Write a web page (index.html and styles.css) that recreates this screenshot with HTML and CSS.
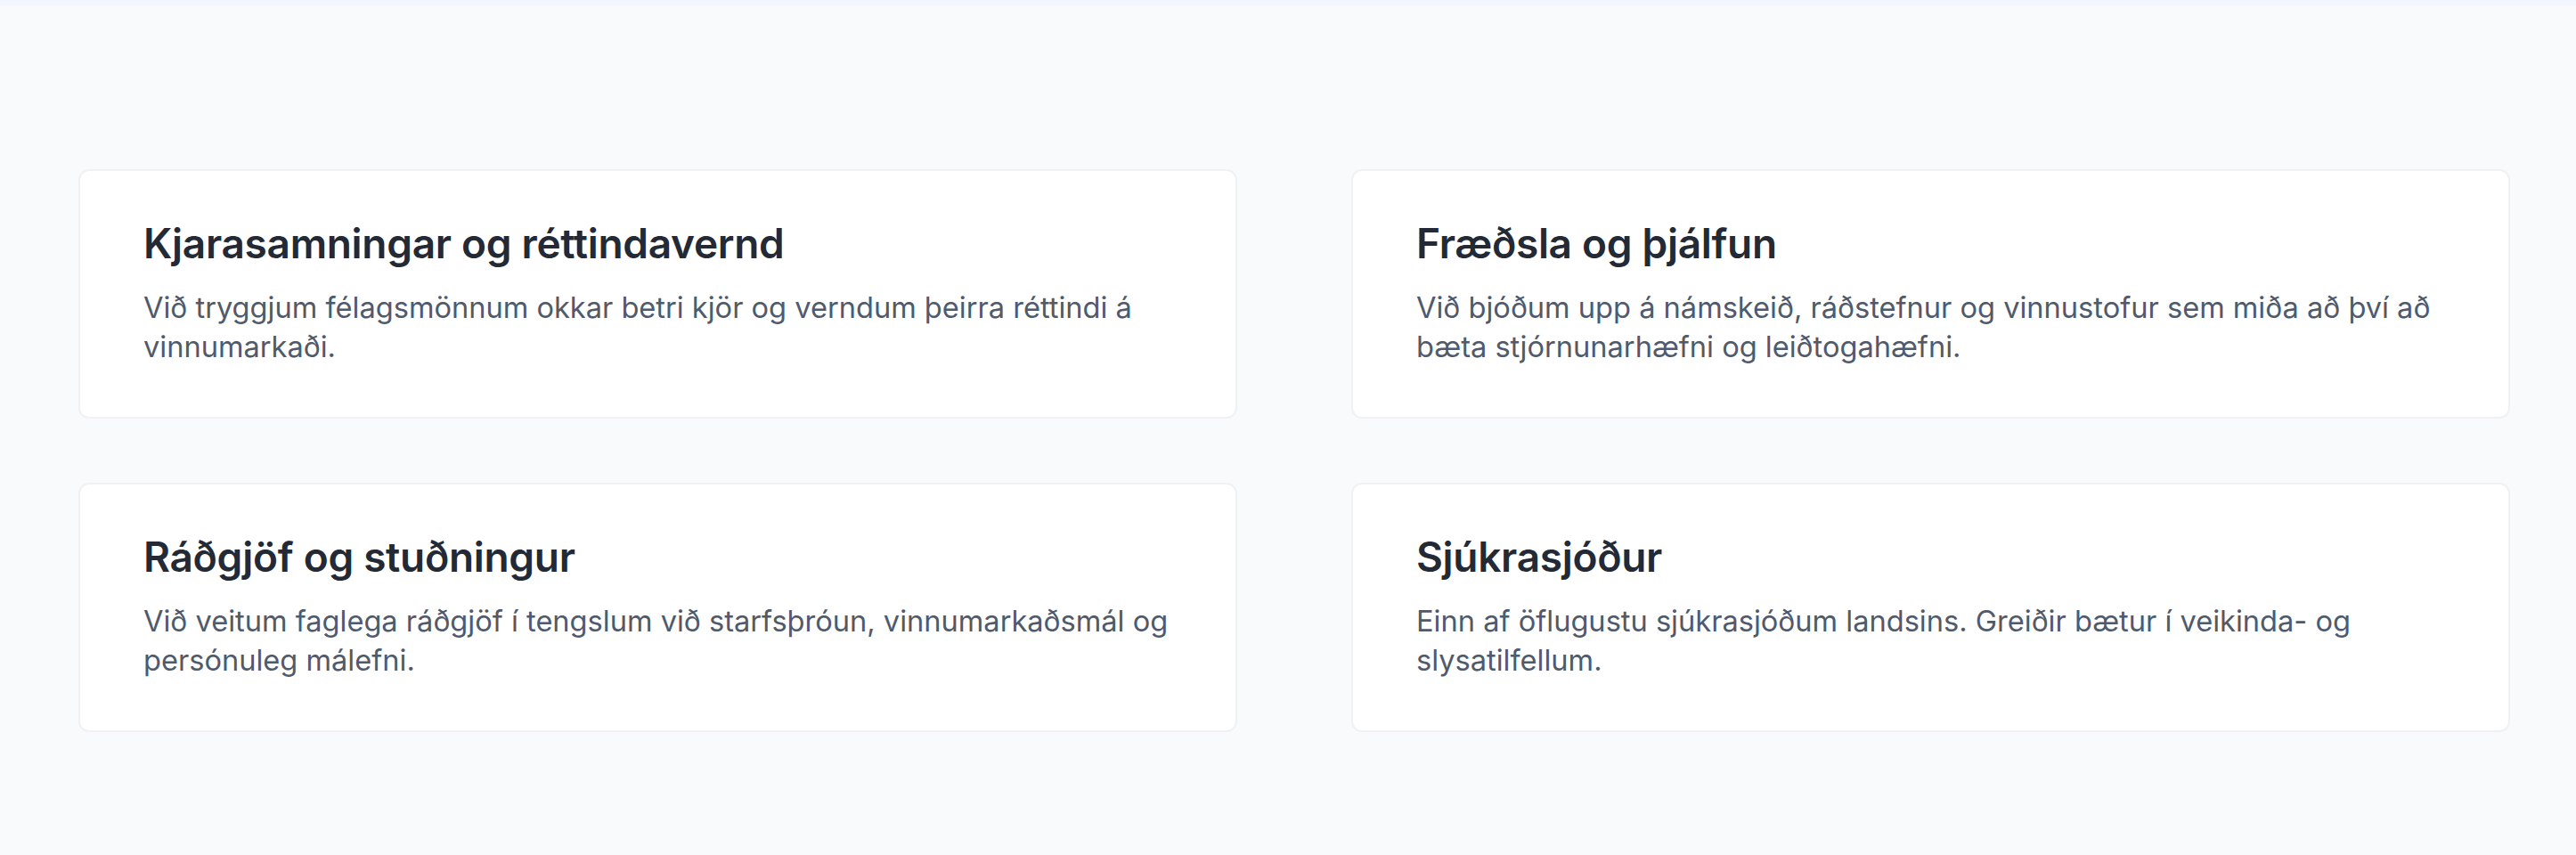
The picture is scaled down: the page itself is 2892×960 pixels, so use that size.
FILE: index.html
```html
<!DOCTYPE html>
<html lang="is">
<head>
<meta charset="utf-8">
<title>Þjónusta</title>
<link rel="stylesheet" href="styles.css">
</head>
<body>
<div class="topbar"></div>
<section class="services">
  <div class="grid">
    <article class="card">
      <h3 class="card-title">Kjarasamningar og réttindavernd</h3>
      <p class="card-text">Við tryggjum félagsmönnum okkar betri kjör og verndum þeirra réttindi á vinnumarkaði.</p>
    </article>
    <article class="card">
      <h3 class="card-title">Fræðsla og þjálfun</h3>
      <p class="card-text">Við bjóðum upp á námskeið, ráðstefnur og vinnustofur sem miða að því að bæta stjórnunarhæfni og leiðtogahæfni.</p>
    </article>
    <article class="card">
      <h3 class="card-title">Ráðgjöf og stuðningur</h3>
      <p class="card-text">Við veitum faglega ráðgjöf í tengslum við starfsþróun, vinnumarkaðsmál og persónuleg málefni.</p>
    </article>
    <article class="card">
      <h3 class="card-title">Sjúkrasjóður</h3>
      <p class="card-text">Einn af öflugustu sjúkrasjóðum landsins. Greiðir bætur í veikinda- og slysatilfellum.</p>
    </article>
  </div>
</section>
</body>
</html>
```

FILE: styles.css
```css
html, body {
  margin: 0;
  padding: 0;
}
body {
  background: #f9fafb;
  font-family: Inter, "Noto Sans", sans-serif;
  height: 960px;
  overflow: hidden;
}
.topbar {
  height: 6px;
  background: #f2f6fe;
}
.services {
  padding: 184px 74px 0 88px;
}
.grid {
  display: grid;
  grid-template-columns: 1fr 1fr;
  column-gap: 128px;
  row-gap: 72px;
}
.card {
  background: #ffffff;
  border: 2px solid #f0f1f3;
  border-radius: 12px;
  padding: 53px 72px 0 71px;
  height: 280px;
  box-sizing: border-box;
}
.card-title {
  margin: 0 0 22px 0;
  font-size: 46px;
  line-height: 56px;
  font-weight: 600;
  color: #232a36;
  letter-spacing: -0.3px;
}
.card-text {
  margin: 0;
  font-size: 32.6px;
  line-height: 44px;
  font-weight: 400;
  color: #4f5a6c;
}
```
